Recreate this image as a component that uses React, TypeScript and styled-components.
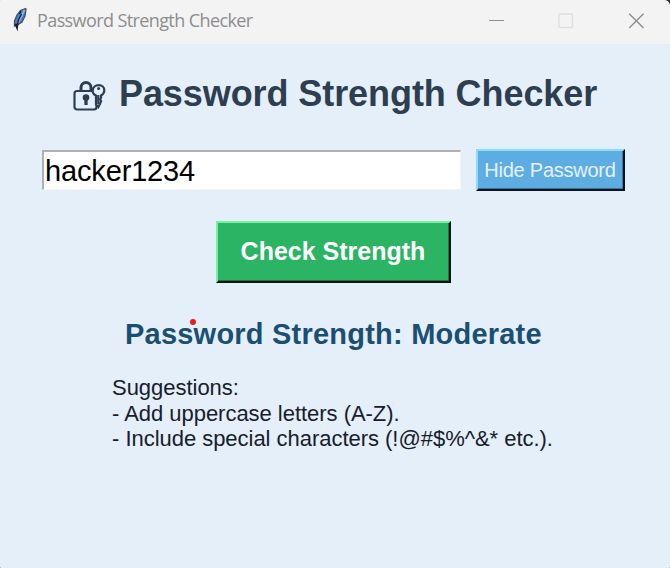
import React, { useState } from "react";
import styled, { createGlobalStyle } from "styled-components";

const GlobalStyle = createGlobalStyle`
  * { box-sizing: border-box; }
  body { margin: 0; background: #2b2b2b; font-family: "Liberation Sans", Arial, sans-serif; }
  button { font-family: inherit; }
`;

const Window = styled.div`
  width: 670px;
  height: 568px;
  display: flex;
  flex-direction: column;
  overflow: hidden;
  background: #e4effa;
  border-radius: 1px 6px 1px 1px;
`;

const TitleBar = styled.header`
  height: 44px;
  flex: none;
  display: flex;
  align-items: flex-start;
  background: #f3f3f3;
`;

const FeatherIcon = styled.svg`
  width: 16px;
  height: 26px;
  margin: 7px 0 0 12px;
`;

const WindowTitle = styled.div`
  margin: 7px 0 0 9px;
  flex: 1;
  font: 18px/26px "Open Sans", "Noto Sans", sans-serif;
  letter-spacing: -0.6px;
  color: #8d8d8d;
  white-space: nowrap;
`;

const WindowControls = styled.div`
  display: flex;
  margin-right: -1px;
`;

const WindowControl = styled.button<{ $disabled?: boolean }>`
  width: 70px;
  height: 41px;
  padding: 0;
  border: 0;
  background: none;
  display: grid;
  place-items: center;
  color: ${(p) => (p.$disabled ? "#dedede" : "#8e8e8e")};
`;

const Content = styled.main`
  flex: 1;
  display: flex;
  flex-direction: column;
  align-items: flex-start;
`;

const Heading = styled.h1`
  display: flex;
  align-items: flex-start;
  margin: 29px 0 0 72px;
  height: 42px;
  font-size: 36px;
  line-height: 42px;
  font-weight: bold;
  letter-spacing: -0.08px;
  color: #2c3e50;
  white-space: nowrap;
`;

const LockIcon = styled.svg`
  width: 34px;
  height: 34px;
  margin: 5px 13px 0 0;
`;

const EntryRow = styled.div`
  display: flex;
  align-items: flex-start;
  gap: 15px;
  margin: 34px 0 0 42px;
`;

const Entry = styled.input`
  width: 419px;
  height: 40px;
  margin-top: 1px;
  padding: 2px 0 0 1px;
  border: solid;
  border-width: 2px 1px 1px 2px;
  border-color: #b0b0b0 #f5f5f5 #f5f5f5 #b0b0b0;
  border-radius: 0;
  outline: none;
  background: #fff;
  color: #000;
  font: 29px/34px "Liberation Sans", Arial, sans-serif;
  letter-spacing: -0.15px;
`;

const RaisedButton = styled.button<{ $tone: "blue" | "green" }>`
  padding: 0;
  border-style: solid;
  border-width: 2px;
  border-radius: 0;
  white-space: nowrap;
  border-color: ${(p) =>
    p.$tone === "blue" ? "#8bdcff #07131c #07131c #8bdcff" : "#78f0a4 #06150c #06150c #78f0a4"};
  box-shadow: inset -1px -1px ${(p) => (p.$tone === "blue" ? "#3c769e" : "#1b733e")};
  background: ${(p) => (p.$tone === "blue" ? "#5dade2" : "#2ab463")};
`;

const ToggleButton = styled(RaisedButton)`
  width: 149px;
  height: 42px;
  padding-right: 1px;
  font-size: 20px;
  letter-spacing: -0.25px;
  color: #e5f2fb;
`;

const CheckButton = styled(RaisedButton)`
  width: 235px;
  height: 62px;
  margin: 30px 0 0 216px;
  padding: 0 1px 1px 0;
  font-size: 25px;
  font-weight: bold;
  letter-spacing: 0;
  color: #fff;
`;

const Result = styled.div`
  position: relative;
  margin: 34px 0 0 125px;
  font-size: 29px;
  line-height: 34px;
  font-weight: bold;
  letter-spacing: 0.22px;
  color: #1b4f72;
  white-space: nowrap;
`;

const RedDot = styled.span`
  position: absolute;
  left: 65px;
  top: 2px;
  width: 6px;
  height: 6px;
  border-radius: 50%;
  background: #e81c1c;
`;

const Suggestions = styled.div`
  margin: 24px 0 0 112px;
  font-size: 22px;
  line-height: 25.7px;
  letter-spacing: -0.03px;
  color: #17202a;
  white-space: nowrap;
`;

export default function App() {
  const [password, setPassword] = useState("hacker1234");
  const [visible, setVisible] = useState(true);
  return (
    <>
      <GlobalStyle />
      <Window>
        <TitleBar>
          <FeatherIcon viewBox="0 0 16 26">
            <path d="M13.500 1.500 8.500 3.500 5 8 2.500 14v5l3-1 4.500-3 3-6 1-7Z" fill="#3f82d0" stroke="#4a4f56" strokeWidth="1.3" />
            <path d="m12.500 3-3 6-3.500 7" stroke="#7fb4ea" strokeWidth="2" fill="none" />
            <path d="m9.500 7-3 6-2 8M9 4 7.500 7" stroke="#101b29" strokeWidth="1.2" fill="none" />
            <path d="m2.500 17 3 7.500 1-8" fill="#202020" />
          </FeatherIcon>
          <WindowTitle>Password Strength Checker</WindowTitle>
          <WindowControls>
            <WindowControl aria-label="Minimize">
              <svg width="16" height="16"><path d="M1 7.5h15" stroke="currentColor" /></svg>
            </WindowControl>
            <WindowControl aria-label="Maximize" $disabled>
              <svg width="16" height="16"><rect x="1" y="1" width="13.5" height="13.5" rx="1" fill="none" stroke="currentColor" strokeWidth="1.3" /></svg>
            </WindowControl>
            <WindowControl aria-label="Close">
              <svg width="16" height="16"><path d="m1.200.7 14.300 14.300M15.500.7 1.200 15" stroke="currentColor" strokeWidth="1.4" /></svg>
            </WindowControl>
          </WindowControls>
        </TitleBar>
        <Content>
          <Heading>
            <LockIcon viewBox="0 0 34 34" fill="none" stroke="#2c3e50">
              <path d="M9 13V9.500a5 5 0 0 1 10 0V13" strokeWidth="3" />
              <rect x="2.500" y="13" width="22" height="18.500" rx="2.500" strokeWidth="2.200" />
              <path
                d="M24 17.500c-2.300-1-3.500-3-3.300-5.200.3-3 2.800-5.200 6-5.200s5.600 2.200 5.600 5.200c0 2.200-1 4-3.200 5.200v2l-1 1.700 1 1.800-1 2.500-1.800 3.500-2.300-2.500Z"
                fill="#e4effa"
                strokeWidth="2.200"
              />
              <path d="M26.300 17v9" strokeWidth="2.200" />
              <circle cx="26.600" cy="10.500" r="1.500" fill="#2c3e50" stroke="none" />
              <circle cx="14" cy="19.500" r="3.300" fill="#2c3e50" stroke="none" />
              <path d="M14 20v7" strokeWidth="3.300" />
            </LockIcon>
            Password Strength Checker
          </Heading>
          <EntryRow>
            <Entry
              type={visible ? "text" : "password"}
              value={password}
              spellCheck={false}
              onChange={(e) => setPassword(e.target.value)}
            />
            <ToggleButton $tone="blue" onClick={() => setVisible(!visible)}>
              {visible ? "Hide Password" : "Show Password"}
            </ToggleButton>
          </EntryRow>
          <CheckButton $tone="green">Check Strength</CheckButton>
          <Result>
            Password Strength: Moderate
            <RedDot />
          </Result>
          <Suggestions>
            <div>Suggestions:</div>
            <div>- Add uppercase letters (A-Z).</div>
            <div>- Include special characters (!@#$%^&amp;* etc.).</div>
          </Suggestions>
        </Content>
      </Window>
    </>
  );
}
